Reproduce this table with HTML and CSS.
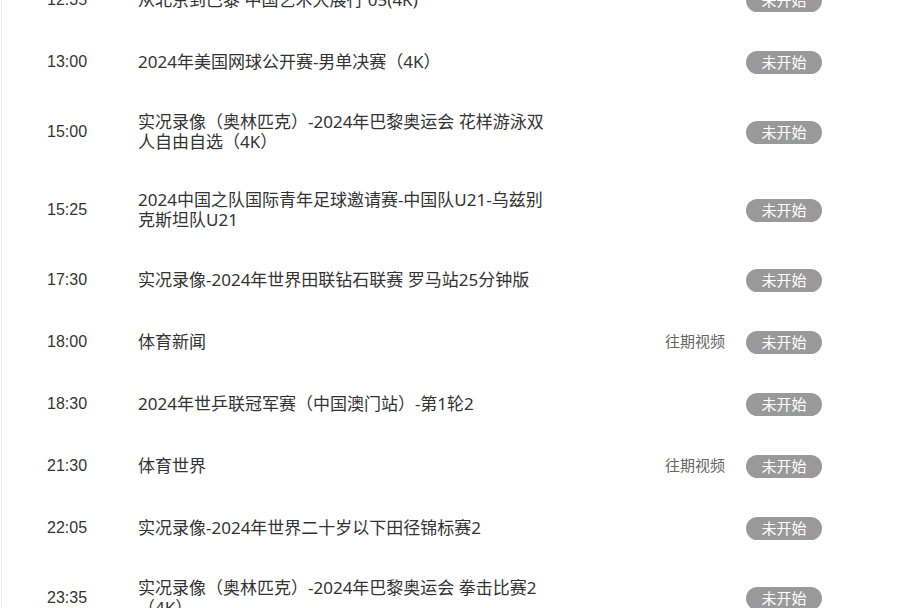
FILE: index.html
```html
<!DOCTYPE html>
<html lang="zh-CN">
<head>
<meta charset="utf-8">
<title>节目单</title>
<link rel="stylesheet" href="styles.css">
</head>
<body>
<ul class="list">
  <li class="row"><span class="time">12:35</span><span class="title">从北京到巴黎 中国艺术大展行 05(4K)</span><span class="replay"></span><span class="badge">未开始</span></li>
  <li class="row"><span class="time">13:00</span><span class="title">2024年美国网球公开赛-男单决赛（4K）</span><span class="replay"></span><span class="badge">未开始</span></li>
  <li class="row"><span class="time">15:00</span><span class="title">实况录像（奥林匹克）-2024年巴黎奥运会 花样游泳双人自由自选（4K）</span><span class="replay"></span><span class="badge">未开始</span></li>
  <li class="row"><span class="time">15:25</span><span class="title">2024中国之队国际青年足球邀请赛-中国队U21-乌兹别克斯坦队U21</span><span class="replay"></span><span class="badge">未开始</span></li>
  <li class="row"><span class="time">17:30</span><span class="title">实况录像-2024年世界田联钻石联赛 罗马站25分钟版</span><span class="replay"></span><span class="badge">未开始</span></li>
  <li class="row"><span class="time">18:00</span><span class="title">体育新闻</span><span class="replay">往期视频</span><span class="badge">未开始</span></li>
  <li class="row"><span class="time">18:30</span><span class="title">2024年世乒联冠军赛（中国澳门站）-第1轮2</span><span class="replay"></span><span class="badge">未开始</span></li>
  <li class="row"><span class="time">21:30</span><span class="title">体育世界</span><span class="replay">往期视频</span><span class="badge">未开始</span></li>
  <li class="row"><span class="time">22:05</span><span class="title">实况录像-2024年世界二十岁以下田径锦标赛2</span><span class="replay"></span><span class="badge">未开始</span></li>
  <li class="row"><span class="time">23:35</span><span class="title">实况录像（奥林匹克）-2024年巴黎奥运会 拳击比赛2（4K）</span><span class="replay"></span><span class="badge">未开始</span></li>
</ul>
</body>
</html>
```
FILE: styles.css
```css
html, body {
  margin: 0;
  padding: 0;
  background: #fff;
}
body {
  font-family: "Liberation Sans", "Noto Sans CJK SC", sans-serif;
  color: #333;
  overflow: hidden;
}
.list {
  list-style: none;
  margin: -31px 0 0 1px;
  padding: 0;
  border-left: 1px solid #ececec;
}
.row {
  display: grid;
  grid-template-columns: 91px 416px 1fr auto;
  align-items: center;
  padding: 19px 85px 19px 45px;
  min-height: 24px;
}
.time {
  font-size: 16px;
  line-height: 20px;
  color: #333;
}
.title {
  font-family: "Noto Sans", "Noto Sans CJK SC", sans-serif;
  font-size: 17px;
  line-height: 20px;
  color: #333;
}
.replay {
  justify-self: end;
  font-size: 15px;
  line-height: 20px;
  color: #666;
  margin-right: 21px;
}
.badge {
  display: block;
  width: 76px;
  height: 23px;
  line-height: 23px;
  border-radius: 12px;
  background: #999;
  color: #fff;
  font-size: 15px;
  text-align: center;
}
```
